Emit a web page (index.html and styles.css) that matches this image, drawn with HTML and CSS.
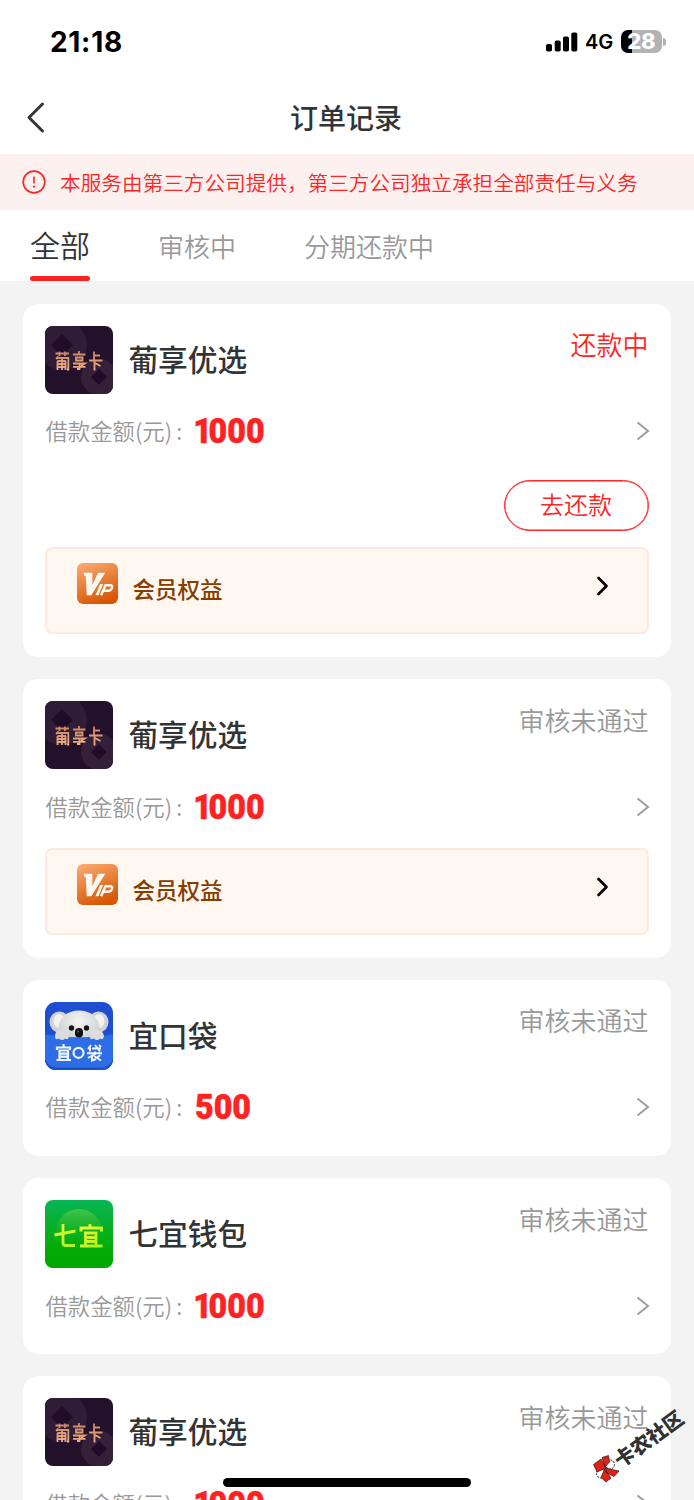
FILE: index.html
```
<!DOCTYPE html>
<html lang="zh-CN">
<head>
<meta charset="utf-8">
<title>订单记录</title>
<link rel="stylesheet" href="styles.css">
</head>
<body>
<svg width="0" height="0" class="defs">
  <defs>
    <linearGradient id="vipbg" x1="0.2" y1="0" x2="0.6" y2="1"><stop offset="0" stop-color="#f8a76e"/><stop offset="1" stop-color="#d65500"/></linearGradient>
    <linearGradient id="green" x1="0" y1="0" x2="0" y2="1"><stop offset="0" stop-color="#08b456"/><stop offset="0.7" stop-color="#04ad06"/><stop offset="1" stop-color="#04a805"/></linearGradient>
    <linearGradient id="disc" x1="0" y1="0" x2="0" y2="1"><stop offset="0" stop-color="#48c34c"/><stop offset="0.8" stop-color="#04ad10" stop-opacity="0"/></linearGradient>
    <linearGradient id="lime" x1="0" y1="0" x2="1" y2="1"><stop offset="0" stop-color="#f4f83a"/><stop offset="1" stop-color="#a5f51a"/></linearGradient>
    <linearGradient id="copper" x1="0" y1="0" x2="0" y2="1"><stop offset="0" stop-color="#c98662"/><stop offset="1" stop-color="#f0b084"/></linearGradient>
    <radialGradient id="fur" cx="0.5" cy="0.3" r="0.7"><stop offset="0" stop-color="#f3f3f3"/><stop offset="1" stop-color="#c9cbcc"/></radialGradient>
    <clipPath id="round"><rect width="68" height="68" rx="8"/></clipPath>
    <clipPath id="round2"><rect width="68" height="68" rx="11"/></clipPath>
  </defs>
  <symbol id="logo-px" viewBox="0 0 68 68">
    <g clip-path="url(#round)">
      <rect width="68" height="68" fill="#23102a"/>
      <circle cx="17" cy="19" r="25" fill="#2f1c36"/>
      <path d="M17 8 28 19 17 30 6 19Z" fill="#200c28"/>
      <circle cx="54" cy="51" r="18" fill="#342038"/>
      <path d="M54 43 62 51 54 59 46 51Z" fill="#200c28"/>
    </g>
    <g fill="none" stroke="url(#copper)" stroke-width="1.8">
      <path d="M10.500 27.500H24M14.500 25.500V30M20 25.500V30M13.500 30.500 11 33M12.500 32H23.300V43.500H22M12.500 35H21M12.500 38H21M12.500 41H21M12.500 35V44M17 31V44M20.500 35V44"/>
      <path d="M34 25V28M28 28.500H40.500M31 31.500H37.500V34.500H31ZM28 37.500H40L36 40M34.500 38V43H32M28 40.800H40.500"/>
      <path d="M49 25.500V34M49 29.500H55M44 34.500H57.500M49.500 34.500V44.500M50 37 55.500 40"/>
    </g>
  </symbol>
  <symbol id="logo-koala" viewBox="0 0 68 68">
    <g clip-path="url(#round2)">
      <rect width="68" height="68" fill="#204ed1"/>
      <ellipse cx="14.500" cy="20" rx="10" ry="10.500" fill="#cfd1d4"/><ellipse cx="53.500" cy="20" rx="10" ry="10.500" fill="#cfd1d4"/>
      <ellipse cx="14" cy="19" rx="5.500" ry="7" fill="#f2f2f3"/><ellipse cx="54" cy="19" rx="5.500" ry="7" fill="#f2f2f3"/>
      <ellipse cx="34" cy="26" rx="20.500" ry="17.500" fill="url(#fur)"/>
      <path d="M0 32.500Q34 38 68 32.500V68H0Z" fill="#2d6ee8"/>
      <path d="M0 56Q2 65 12 65.500H56Q66 65 68 56V68H0Z" fill="#1c50c9"/>
      <circle cx="26.500" cy="26" r="2.700" fill="#181512"/><circle cx="41.500" cy="26" r="2.700" fill="#181512"/>
      <rect x="30" y="26" width="8" height="9.500" rx="4" fill="#111"/>
      <path d="M33 28.500v2" stroke="#666" stroke-width="1.500"/>
      <g fill="#deddde"><path d="M10 34q0-6 7-6 6 0 7 6-1 5-4 2.500-3 3-6 0-4 2.500-4-2.500ZM45 34q0-6 7-6 6 0 7 6-1 5-4 2.500-3 3-6 0-4 2.500-4-2.500Z"/></g>
    </g>
    <g fill="none" stroke="#f2f6fc" stroke-width="2.200">
      <path d="M18.500 42V45M12 48V45.500H25V48M14.500 58V48.500H23V58M15 51.600H22.500M15 54.600H22.500M11.500 58H26"/>
      <circle cx="33.500" cy="50.800" r="5"/>
      <path stroke-width="2" d="M46 43 43 47M45 45.500V49.500M47 46.500H56M50 43 55 49.500M54 43 56 45M42 51.300H57M50 49.500V52L43 56M47 54V58.500L51 57M49 54 56 58.500M55 53 52 56"/>
    </g>
  </symbol>
  <symbol id="logo-qiyi" viewBox="0 0 68 68">
    <g clip-path="url(#round)">
      <rect width="68" height="68" fill="url(#green)"/>
      <circle cx="34" cy="32" r="23" fill="url(#disc)"/>
      <path d="M0 48Q25 35 68 49V68H0Z" fill="#03a805" opacity=".5"/>
    </g>
    <g fill="none" stroke="url(#lime)" stroke-width="2.800">
      <path d="M9.500 35 30.500 31M18 24V43Q18 45.500 21 45.500H30"/>
      <path d="M45 24V27M36 31.500V28H56.500V31.500M40.500 46V33H51V46M41 37.500H51M41 41.500H51M35 46H57.500"/>
    </g>
  </symbol>
  <symbol id="vip" viewBox="0 0 40 40">
    <rect width="40" height="40" rx="6" fill="url(#vipbg)"/>
    <path fill="#fff8f2" d="M6.500 9.500H15V21.500L20.500 9.500H27.500L14 31.500H9.500L8.500 12.500H7ZM22.500 20.500H25.500L21 31.500H18Z"/>
    <path fill="none" stroke="#fff8f2" stroke-width="2.400" d="M23.500 31.500 27.800 21.700H32.500Q35 21.700 34 24.500 33 27 30.500 27H26"/>
  </symbol>
  <symbol id="next" viewBox="0 0 14 20"><path d="M1.500 1.500 12 10 1.500 18.500" fill="none" stroke="#9d9d9d" stroke-width="2"/></symbol>
  <symbol id="go" viewBox="0 0 14 20"><path d="M2.500 2 10.500 10 2.500 18" fill="none" stroke="#050505" stroke-width="2.700" stroke-linecap="round" stroke-linejoin="round"/></symbol>
</svg>
<div class="screen">
  <div class="statusbar">
    <span class="time">21:18</span>
    <div class="indicators">
      <svg class="signal" viewBox="0 0 32 20"><rect x="0" y="12" width="6" height="7.500" rx="1.800"/><rect x="8.700" y="8.500" width="6" height="11" rx="1.800"/><rect x="17" y="4.500" width="6" height="15" rx="1.800"/><rect x="25.300" y="0.500" width="6" height="19" rx="1.800"/></svg>
      <span class="net">4G</span>
      <div class="battery"><span>28</span></div>
      <i class="cap"></i>
    </div>
  </div>
  <header class="navbar">
    <svg class="back" viewBox="0 0 20 34"><path d="M16.500 3 3 16.500 16.500 30" fill="none" stroke="#323437" stroke-width="3" stroke-linecap="round" stroke-linejoin="round"/></svg>
    <h1>订单记录</h1>
  </header>
  <div class="notice">
    <svg viewBox="0 0 24 24"><circle cx="12" cy="12" r="10.800" fill="none" stroke="#ff2525" stroke-width="1.700"/><path d="M12 6.500V13.600" stroke="#ff2525" stroke-width="1.600"/><circle cx="12" cy="16.700" r="1.100" fill="#ff2525"/></svg>
    <span>本服务由第三方公司提供，第三方公司独立承担全部责任与义务</span>
  </div>
  <nav class="tabs">
    <span class="tab active">全部</span><span class="tab">审核中</span><span class="tab">分期还款中</span>
  </nav>
  <main class="orders">
    <article class="card">
      <div class="head"><svg class="logo"><use href="#logo-px"/></svg><h2>葡享优选</h2><span class="state red">还款中</span></div>
      <div class="row"><span class="label">借款金额(元)<i>:</i></span><b class="amount"><span>1</span>000</b><svg class="chev"><use href="#next"/></svg></div>
      <div class="actions"><button class="repay">去还款</button></div>
      <div class="benefit"><svg class="vip"><use href="#vip"/></svg><span>会员权益</span><svg class="go"><use href="#go"/></svg></div>
    </article>
    <article class="card">
      <div class="head"><svg class="logo"><use href="#logo-px"/></svg><h2>葡享优选</h2><span class="state">审核未通过</span></div>
      <div class="row"><span class="label">借款金额(元)<i>:</i></span><b class="amount"><span>1</span>000</b><svg class="chev"><use href="#next"/></svg></div>
      <div class="benefit"><svg class="vip"><use href="#vip"/></svg><span>会员权益</span><svg class="go"><use href="#go"/></svg></div>
    </article>
    <article class="card">
      <div class="head"><svg class="logo"><use href="#logo-koala"/></svg><h2>宜口袋</h2><span class="state">审核未通过</span></div>
      <div class="row"><span class="label">借款金额(元)<i>:</i></span><b class="amount">500</b><svg class="chev"><use href="#next"/></svg></div>
    </article>
    <article class="card">
      <div class="head"><svg class="logo"><use href="#logo-qiyi"/></svg><h2>七宜钱包</h2><span class="state">审核未通过</span></div>
      <div class="row"><span class="label">借款金额(元)<i>:</i></span><b class="amount"><span>1</span>000</b><svg class="chev"><use href="#next"/></svg></div>
    </article>
    <article class="card">
      <div class="head"><svg class="logo"><use href="#logo-px"/></svg><h2>葡享优选</h2><span class="state">审核未通过</span></div>
      <div class="row"><span class="label">借款金额(元)<i>:</i></span><b class="amount"><span>1</span>000</b><svg class="chev"><use href="#next"/></svg></div>
    </article>
  </main>
  <div class="watermark">
    <svg viewBox="0 0 26 28"><circle cx="17" cy="9.500" r="4.500" fill="#fff" stroke="#222" stroke-dasharray="2 1"/><circle cx="8" cy="18.500" r="4.500" fill="#fff" stroke="#222" stroke-dasharray="2 1"/><g fill="#df2118" stroke="#2b1715" stroke-width=".7"><path d="M0.500 9.500 8 4 13 13 4 17ZM9 2.500 15.500 0.500 16.500 7 12 12ZM12 13 26 16 21 21.500 14 18ZM11.500 14 18 23 13 27 8 22.500Z"/></g></svg>
    <span>卡农社区</span>
  </div>
  <div class="home"></div>
</div>
</body>
</html>
```
FILE: styles.css
```
* { box-sizing: border-box; }
body { margin: 0; background: #f3f3f3; font-family: "Noto Sans CJK SC", sans-serif; }
.defs { position: absolute; }
.screen { position: relative; width: 694px; height: 1500px; overflow: hidden; background: #f3f3f3; }
.statusbar { height: 82px; padding: 1px 29px 0 50px; display: flex; align-items: center; justify-content: space-between; background: #fff; font-family: Inter, sans-serif; color: #000; }
.time { font-size: 28px; font-weight: 700; letter-spacing: 0.7px; line-height: 30px; }
.indicators { display: flex; align-items: center; }
.signal { width: 32px; height: 20px; }
.net { margin: 1px 0 0 7px; width: 28px; font-size: 20px; line-height: 22px; font-weight: 600; letter-spacing: 0; }
.battery { margin-left: 8px; width: 41px; height: 23px; border-radius: 7px; background: linear-gradient(90deg, #000 11px, #b3b3b3 11px); color: #fff; font-size: 21px; line-height: 24px; font-weight: 800; text-align: center; letter-spacing: -0.5px; }
.battery span { display: inline-block; transform: scaleX(1.05); }
.cap { width: 3px; height: 8px; margin: 0 -1px 0 1px; background: #b3b3b3; border-radius: 0 3px 3px 0; }
.navbar { height: 72px; display: grid; grid-template-columns: 60px 1fr 60px; align-items: center; background: #fff; }
.back { width: 20px; height: 34px; margin-left: 26px; }
h1 { margin: 0; padding: 0 2px 2px 0; font-size: 28px; font-weight: 500; line-height: 40px; text-align: center; color: #323437; }
.notice { height: 56px; padding: 0 22px; display: flex; align-items: center; gap: 14px; background: #fdf1f0; color: #ff2525; font-size: 20.63px; line-height: 30px; white-space: nowrap; font-weight: 350; }
.notice svg { width: 24px; height: 24px; flex: none; }
.tabs { height: 71px; padding-left: 30px; display: flex; align-items: stretch; background: #fff; color: #999; font-size: 26px; line-height: 71px; font-weight: 350; }
.tab + .tab { margin-left: 68px; }
.active { position: relative; color: #333; font-size: 30px; line-height: 68px; }
.active::after { content: ""; position: absolute; left: 0; bottom: 0; width: 60px; height: 5px; border-radius: 3px; background: #ff2020; }
.orders { padding: 23px 23px 0; display: flex; flex-direction: column; gap: 22.4px; }
.card { padding: 22.4px; background: #fff; border-radius: 15px; }
.head { height: 67.5px; display: flex; align-items: center; }
.logo { width: 68px; height: 68px; flex: none; }
h2 { flex: 1; margin: 0 0 2px 15px; font-size: 29.7px; font-weight: 500; line-height: 44px; color: #333; }
.state { align-self: flex-start; font-size: 26px; line-height: 36px; color: #999; font-weight: 350; }
.state.red { color: #ff2525; }
.row { height: 49px; padding-bottom: 3px; margin-top: 14.500px; display: flex; align-items: center; }
.label { width: 150px; font-size: 22.4px; line-height: 34px; padding-bottom: 2px; color: #999; white-space: nowrap; font-weight: 350; }
.label i { font-style: normal; margin-left: 4px; }
.amount { flex: 1; padding-top: 2px; font: 900 35px/44px Roboto, sans-serif; color: #ff2222; transform: scaleX(.92); transform-origin: left; -webkit-text-stroke: 0.5px #ff2222; }
.amount span { margin-left: -2px; letter-spacing: -3.5px; }
.chev { width: 14px; height: 20px; margin-right: -1px; }
.actions { margin-top: 22.500px; padding-bottom: 1px; display: flex; justify-content: flex-end; }
.repay { width: 145px; height: 51px; padding: 0 0 3px; border: 1.500px solid #ff2525; border-radius: 26px; background: #fff; color: #ff2525; font: 350 24px/46px "Noto Sans CJK SC", sans-serif; box-shadow: inset 0 0 0 .5px #ff2525; }
.benefit { height: 87.400px; margin-top: 15.200px; padding: 0 37px 0 30px; display: flex; align-items: center; background: #fff7f0; border: 2px solid #fdeadd; border-radius: 7px; }
.vip { width: 41px; height: 41px; margin-bottom: 14px; }
.benefit span { flex: 1; margin: 0 0 5px 14px; font-size: 22.500px; font-weight: 500; line-height: 34px; color: #873c00; }
.go { width: 14px; height: 20px; margin-bottom: 9px; }
.home { position: absolute; left: 223px; top: 1478px; width: 248px; height: 9px; border-radius: 5px; background: #000; }
.watermark { position: absolute; left: 593px; top: 1455px; }
.watermark svg { display: block; width: 26px; height: 28px; }
.watermark span { position: absolute; left: 23px; top: -5px; font-size: 20px; line-height: 24px; font-weight: 900; white-space: nowrap; color: #303132; transform: rotate(-36deg); transform-origin: 0 50%; }
```
